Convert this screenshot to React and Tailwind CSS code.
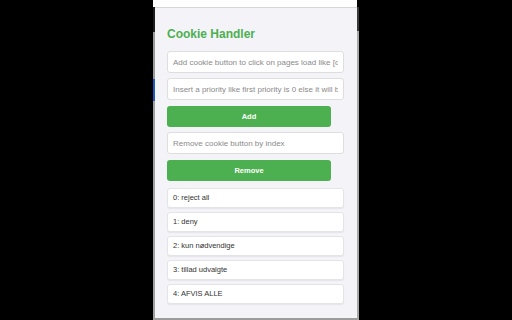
import React from "react";

const items = ["0: reject all", "1: deny", "2: kun nødvendige", "3: tillad udvalgte", "4: AFVIS ALLE"];

export default function App() {
  return (
    <div className="w-[512px] h-[320px] bg-black overflow-hidden font-['Liberation_Sans',Arial,sans-serif]">
      <div className="ml-[153px] w-[206px] h-[320px] flex flex-col">
        <div className="w-[204px] h-[7px] bg-white shrink-0" />
        <div className="flex flex-1 min-h-0">
          <div className="w-[2px] flex flex-col shrink-0">
            <div className="h-[25px] bg-[#1c1c1c]" />
            <div className="h-[47px] bg-[#9a9a9a]" />
            <div className="h-[22px] bg-[#1f57c3]" />
            <div className="flex-1 bg-[#a0a0a0]" />
          </div>
          <div className="w-[202px] bg-[#f4f4f8] border-t border-[#d6d6d6] border-b-2 border-b-[#9c9c9c] flex flex-col pl-[12px] pr-[13px]">
            <h1 className="mt-[19px] text-[12px] leading-[14px] font-bold text-[#4caf50]">Cookie Handler</h1>
            <input
              className="mt-[10px] w-[177px] h-[22px] bg-white border border-[#dedede] rounded-[3px] px-[5px] text-[8px] text-[#333] placeholder:text-[#8a8a8a] outline-none"
              placeholder="Add cookie button to click on pages load like [data-testid]"
            />
            <input
              className="mt-[5px] w-[177px] h-[22px] bg-white border border-[#dedede] rounded-[3px] px-[5px] text-[8px] text-[#333] placeholder:text-[#8a8a8a] outline-none"
              placeholder="Insert a priority like first priority is 0 else it will be added last"
            />
            <button className="mt-[6px] w-[164px] h-[21px] bg-[#4caf50] rounded-[3px] text-white text-[7.5px] font-bold">
              Add
            </button>
            <input
              className="mt-[5px] w-[177px] h-[22px] bg-white border border-[#dedede] rounded-[3px] px-[5px] text-[8px] text-[#333] placeholder:text-[#8a8a8a] outline-none"
              placeholder="Remove cookie button by index"
            />
            <button className="mt-[6px] w-[164px] h-[21px] bg-[#4caf50] rounded-[3px] text-white text-[7.5px] font-bold">
              Remove
            </button>
            <div className="mt-[7px] flex flex-col gap-[4px]">
              {items.map((t) => (
                <div
                  key={t}
                  className="w-[177px] h-[20px] bg-white border border-[#e4e4e8] rounded-[3px] shadow-[0_1px_1px_rgba(0,0,0,0.06)] px-[5px] flex items-center text-[7.5px] text-[#333]"
                >
                  {t}
                </div>
              ))}
            </div>
          </div>
          <div className="w-[2px] flex flex-col shrink-0">
            <div className="h-[24px] bg-[#3a3a3a]" />
            <div className="flex-1 bg-[#a8a8a8]" />
          </div>
        </div>
      </div>
    </div>
  );
}
